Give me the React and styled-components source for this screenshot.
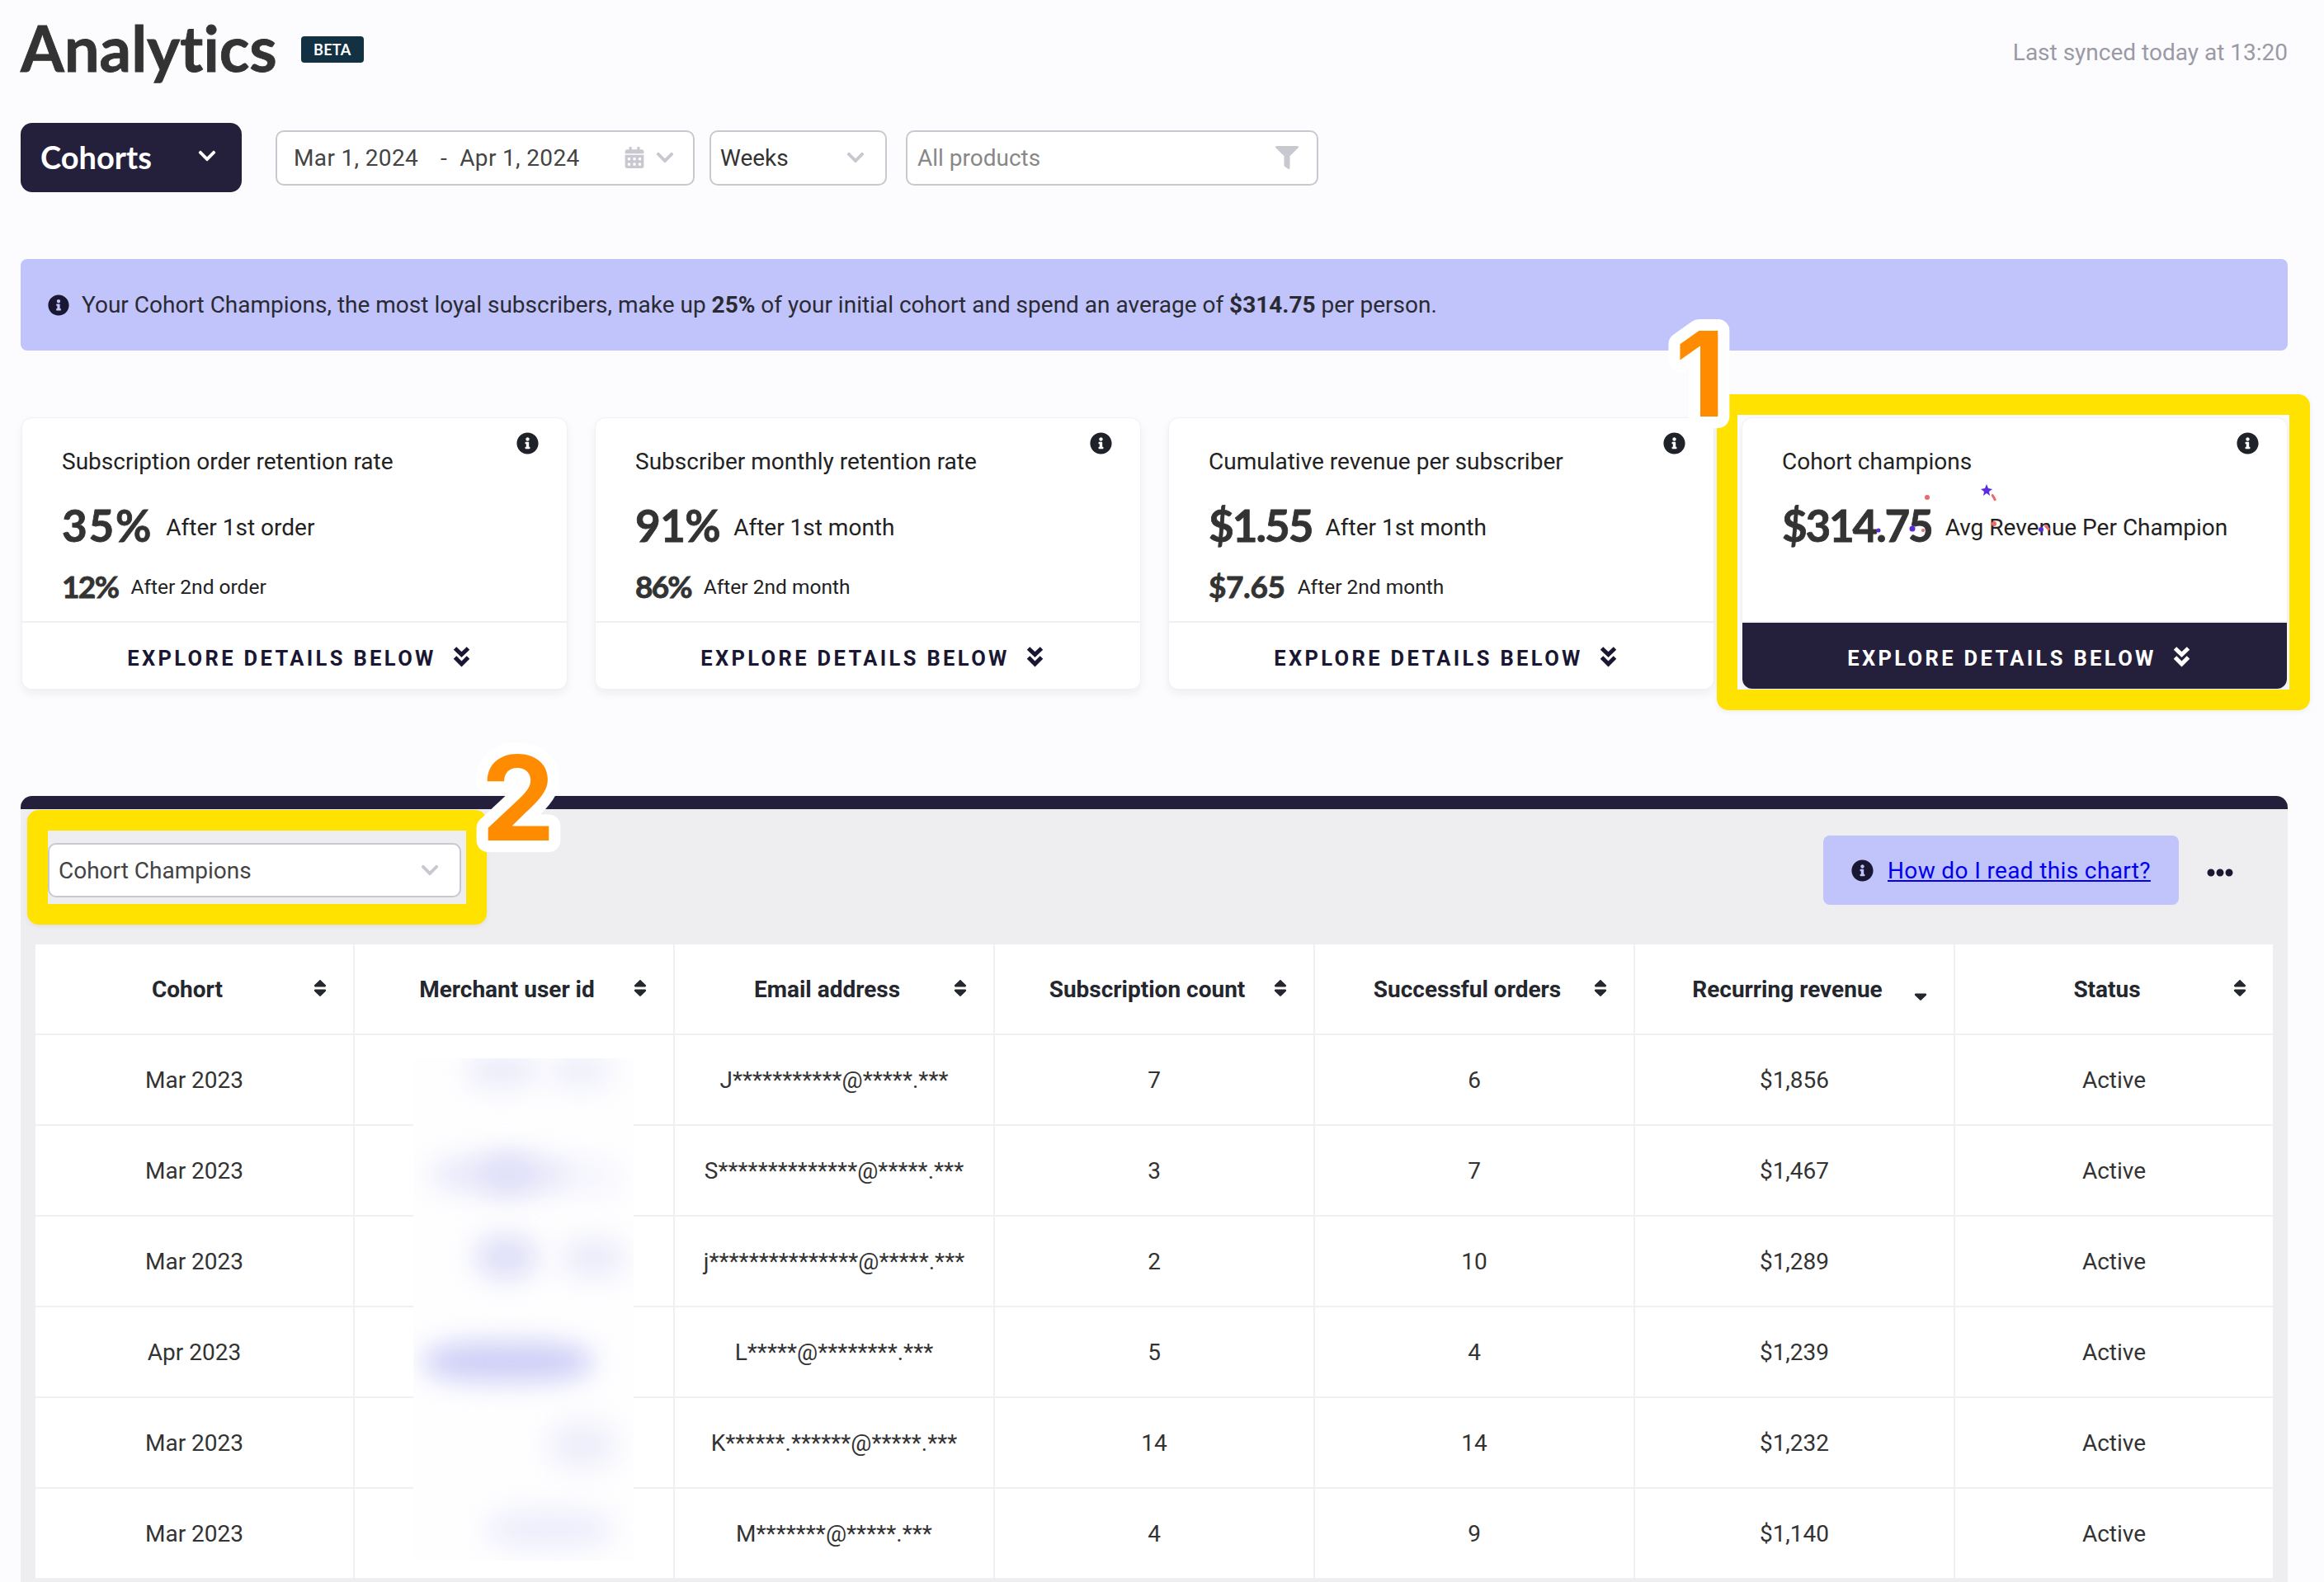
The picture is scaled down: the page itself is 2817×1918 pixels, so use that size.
import React from "react";
import styled, { createGlobalStyle } from "styled-components";
import { FaInfoCircle, FaChevronDown, FaCalendarAlt, FaFilter, FaSort, FaSortDown, FaEllipsisH } from "react-icons/fa";

const Global = createGlobalStyle`
  html, body { margin: 0; padding: 0; height: 1918px; overflow: hidden; background: #fcfcfe; }
  body { font-family: Roboto, "Liberation Sans", sans-serif; color: #222; }
  * { box-sizing: border-box; }
`;

const Page = styled.div`
  position: relative;
  height: 1918px;
  padding: 0 44px 0 25px;
  overflow: hidden;
`;

const Header = styled.header`
  display: flex;
  align-items: center;
  height: 120px;
`;
const Title = styled.h1`
  margin: -4px 0 0;
  font: 700 76px/120px Lato, sans-serif;
  font-variant-ligatures: none;
  -webkit-text-stroke: .8px #333;
  color: #333;
`;
const Beta = styled.span`
  margin-left: 29px;
  width: 76px;
  height: 32px;
  border-radius: 4px;
  background: #123244;
  color: #fff;
  font: 700 18px/32px Lato, sans-serif;
  text-align: center;
  letter-spacing: .3px;
`;
const Synced = styled.div`
  margin-left: auto;
  padding-top: 6px;
  font-size: 28px;
  color: #9a9aa6;
`;

const Filters = styled.div`
  display: flex;
  align-items: center;
  height: 84px;
  margin-top: 29px;
`;
const ReportButton = styled.div`
  display: flex;
  align-items: center;
  justify-content: space-between;
  width: 268px;
  height: 84px;
  padding: 0 30px 3px 24px;
  border-radius: 14px;
  background: #24203c;
  color: #fff;
  font: 700 38px Lato, sans-serif;
  svg { width: 24px; height: 24px; margin-top: -2px; }
`;
const Field = styled.div`
  display: flex;
  align-items: center;
  width: ${(p) => p.$w}px;
  height: 67px;
  margin-left: ${(p) => p.$ml}px;
  padding: 0 ${(p) => p.$pr}px 0 ${(p) => p.$pl}px;
  border: 2px solid #c8c8d0;
  border-radius: 10px;
  background: #fff;
  font-size: 28px;
  letter-spacing: ${(p) => p.$track || 0}px;
  color: ${(p) => p.$color || "#444"};
`;
const Spread = styled.span`
  margin-left: auto;
  display: flex;
  align-items: center;
  gap: 12px;
  color: #c8c8d0;
`;
const DateDash = styled.span`
  margin: 0 15px 0 27px;
`;

const Banner = styled.div`
  display: flex;
  align-items: center;
  gap: 15px;
  height: 111px;
  margin-top: 81px;
  padding-left: 33px;
  border-radius: 8px;
  background: #c1c3fb;
  font-size: 28px;
  color: #2a2a33;
  svg { width: 26px; height: 26px; color: #1a1733; }
  b { font-weight: 700; }
`;

const Cards = styled.div`
  display: grid;
  grid-template-columns: repeat(4, 660px);
  gap: 35px;
  margin: 82px 0 0 2px;
`;
const Card = styled.div`
  position: relative;
  display: flex;
  flex-direction: column;
  height: 328px;
  border-radius: 12px;
  background: #fff;
  box-shadow: 0 0 0 1px #f1f1f3, 0 5px 12px rgba(30, 30, 60, .07);
  overflow: hidden;
`;
const InfoBadge = styled.span`
  position: absolute;
  top: 17px;
  right: 34px;
  color: #1f2229;
  svg { width: 27px; height: 27px; display: block; }
`;
const CardBody = styled.div`
  flex: 1;
  padding: 34px 0 0 48px;
  border-bottom: 2px solid #f0f0f2;
`;
const CardTitle = styled.div`
  font-size: 28px;
  line-height: 38px;
  color: #222;
`;
const Metric = styled.div`
  display: flex;
  align-items: center;
  margin-top: ${(p) => (p.$small ? 22 : 27)}px;
  height: ${(p) => (p.$small ? 44 : 60)}px;
`;
const MetricValue = styled.span`
  font: 700 ${(p) => (p.$small ? 37 : 53)}px/1 Lato, sans-serif;
  letter-spacing: ${(p) => p.$track}px;
  -webkit-text-stroke: .8px #333;
  color: #333;
  margin-right: ${(p) => (p.$small ? 15 : 16)}px;
`;
const MetricLabel = styled.span`
  padding-top: ${(p) => (p.$small ? 2 : 6)}px;
  font-size: ${(p) => (p.$small ? 24.5 : 28)}px;
  color: #222;
`;
const Explore = styled.div`
  display: flex;
  align-items: center;
  justify-content: center;
  gap: 20px;
  height: 80px;
  padding: 6px 0 0 10px;
  background: ${(p) => (p.$active ? "#24203c" : "#fff")};
  color: ${(p) => (p.$active ? "#fff" : "#1a1733")};
  font-size: 25.5px;
  font-weight: 700;
  letter-spacing: 3.35px;
  svg { width: 21px; height: 25px; margin-top: -3px; }
`;

const Panel = styled.section`
  position: relative;
  margin-top: 130px;
  height: 1000px;
  border-top: 16px solid #24203c;
  border-radius: 14px 14px 0 0;
  background: #eeeef0;
`;
const PanelBar = styled.div`
  display: flex;
  align-items: center;
  height: 164px;
  padding: 0 66px 0 33px;
`;
const ChartSelect = styled(Field)`
  width: 501px;
  height: 66px;
  padding: 0 24px 0 11px;
  margin-top: -16px;
`;
const HelpLink = styled.div`
  display: flex;
  align-items: center;
  gap: 17px;
  margin: -16px 0 0 auto;
  width: 431px;
  height: 84px;
  padding-left: 34px;
  border-radius: 8px;
  background: #c1c3fb;
  font-size: 28px;
  letter-spacing: .36px;
  svg { width: 27px; height: 27px; color: #1a1733; }
  a { color: #0000ee; text-decoration: underline; }
`;
const More = styled.span`
  display: block;
  margin: -11px 0 0 34px;
  color: #1a1733;
  svg { width: 32px; height: 32px; display: block; }
`;

const Table = styled.div`
  position: relative;
  display: grid;
  grid-template-columns: 387px repeat(5, 388px) 385px;
  grid-auto-rows: 110px;
  width: 2712px;
  margin: 0 0 0 18px;
  background: #fff;
`;
const HeadCell = styled.div`
  display: flex;
  align-items: center;
  padding: 0 32px 0 39px;
  border-right: ${(p) => (p.$last ? 0 : "2px solid #f0f0f2")};
  border-bottom: 2px solid #f0f0f2;
  font-size: 28px;
  font-weight: 700;
  color: #24272e;
`;
const HeadLabel = styled.span`
  flex: 1;
  text-align: center;
  white-space: nowrap;
`;
const SortIcon = styled.span`
  display: flex;
  margin-left: 8px;
  flex: none;
  margin-top: ${(p) => (p.$down ? 8 : -2)}px;
  svg { width: 16px; height: 26px; display: block; }
`;
const Cell = styled.div`
  display: flex;
  align-items: center;
  justify-content: center;
  border-right: ${(p) => (p.$last ? 0 : "2px solid #f0f0f2")};
  border-bottom: 2px solid #f0f0f2;
  font-size: 28px;
  color: #333;
  white-space: nowrap;
`;

const Redaction = styled.div`
  position: absolute;
  left: 458px;
  top: 138px;
  width: 267px;
  height: 609px;
  background: #fefeff;
  overflow: hidden;
`;
const Blob = styled.div`
  position: absolute;
  border-radius: 40%;
  filter: blur(16px);
`;

const Frame = styled.div`
  position: absolute;
  border: 25px solid #ffe200;
  border-radius: 14px;
  box-shadow: 0 2px 6px rgba(0,0,0,.06);
  pointer-events: none;
`;
const NumberMark = styled.svg`
  position: absolute;
  overflow: visible;
  pointer-events: none;
  text {
    font: 700 143px Inter, sans-serif;
    fill: #ff8c00;
    stroke: #fff;
    stroke-width: 28px;
    stroke-linejoin: round;
    paint-order: stroke fill;
  }
`;
const Confetti = styled.svg`
  position: absolute;
  left: 0;
  top: 0;
  width: 660px;
  height: 328px;
  pointer-events: none;
`;

const DoubleChevron = () => (
  <svg viewBox="0 0 21 25" fill="none" stroke="currentColor" strokeWidth="5">
    <path d="M2.5 2l8 7.5 8-7.5" />
    <path d="M2.5 13l8 8 8-8" />
  </svg>
);

const cards = [
  { t: "Subscription order retention rate", a: "35%", at: 1.8, al: "After 1st order", b: "12%", bt: -1.6, bl: "After 2nd order" },
  { t: "Subscriber monthly retention rate", a: "91%", at: -0.6, al: "After 1st month", b: "86%", bt: -1.8, bl: "After 2nd month" },
  { t: "Cumulative revenue per subscriber", a: "$1.55", at: -2, al: "After 1st month", b: "$7.65", bt: -0.4, bl: "After 2nd month" },
  { t: "Cohort champions", a: "$314.75", at: -2.2, al: "Avg Revenue Per Champion", active: true },
];
const columns = ["Cohort", "Merchant user id", "Email address", "Subscription count", "Successful orders", "Recurring revenue", "Status"];
const rows = [
  ["Mar 2023", "J***********@*****.***", "7", "6", "$1,856"],
  ["Mar 2023", "S**************@*****.***", "3", "7", "$1,467"],
  ["Mar 2023", "j***************@*****.***", "2", "10", "$1,289"],
  ["Apr 2023", "L*****@********.***", "5", "4", "$1,239"],
  ["Mar 2023", "K******.******@*****.***", "14", "14", "$1,232"],
  ["Mar 2023", "M*******@*****.***", "4", "9", "$1,140"],
];
const blobs = [
  [65, -6, 85, 42, "#ebebfa"], [165, -6, 75, 42, "#eeeefb"],
  [22, 118, 180, 46, "#e8e8fa"], [85, 118, 60, 44, "#dedef8"], [190, 126, 60, 36, "#f4f4fd"],
  [75, 214, 75, 54, "#dfdff8"], [180, 218, 76, 48, "#ebebfa"],
  [12, 344, 205, 48, "#cdcdf7"],
  [165, 440, 80, 58, "#eeeefb"],
  [90, 548, 150, 46, "#ecedfb"],
];

export default function App() {
  return (
    <Page>
      <Global />
      <Header>
        <Title>Analytics</Title>
        <Beta>BETA</Beta>
        <Synced>Last synced today at 13:20</Synced>
      </Header>
      <Filters>
        <ReportButton>Cohorts <FaChevronDown /></ReportButton>
        <Field $w={508} $ml={41} $pl={20} $pr={22} $track={0.35}>
          Mar 1, 2024<DateDash>-</DateDash>Apr 1, 2024
          <Spread><FaCalendarAlt size={26} /><FaChevronDown size={24} /></Spread>
        </Field>
        <Field $w={215} $ml={18} $pl={11} $pr={24} $color="#333">
          Weeks<Spread><FaChevronDown size={24} /></Spread>
        </Field>
        <Field $w={500} $ml={23} $pl={12} $pr={22} $color="#888">
          All products<Spread><FaFilter size={28} /></Spread>
        </Field>
      </Filters>
      <Banner>
        <FaInfoCircle />
        <span>Your Cohort Champions, the most loyal subscribers, make up <b>25%</b> of your initial cohort and spend an average of <b>$314.75</b> per person.</span>
      </Banner>
      <Cards>
        {cards.map((c) => (
          <Card key={c.t}>
            <InfoBadge><FaInfoCircle /></InfoBadge>
            <CardBody>
              <CardTitle>{c.t}</CardTitle>
              <Metric><MetricValue $track={c.at}>{c.a}</MetricValue><MetricLabel>{c.al}</MetricLabel></Metric>
              {c.b && <Metric $small><MetricValue $small $track={c.bt}>{c.b}</MetricValue><MetricLabel $small>{c.bl}</MetricLabel></Metric>}
            </CardBody>
            <Explore $active={c.active}>EXPLORE DETAILS BELOW <DoubleChevron /></Explore>
            {c.active && (
              <Confetti viewBox="0 0 660 328">
                <path d="M296 80l2 5 5 1-4 3 1 5-4-3-4 3 1-5-4-3 5-1z" fill="#5b2be0" />
                <rect x="303" y="92" width="3" height="9" rx="1.5" fill="#ec6a6a" transform="rotate(-30 304 96)" />
                <circle cx="224" cy="96" r="3" fill="#ec6a6a" />
                <circle cx="165" cy="136" r="2.5" fill="#5b2be0" />
                <circle cx="206" cy="134" r="3.5" fill="#5b2be0" />
                <circle cx="219" cy="136" r="2" fill="#ec6a6a" />
                <circle cx="305" cy="128" r="3" fill="#ec6a6a" />
                <circle cx="362" cy="135" r="3" fill="#5b2be0" />
                <rect x="368" y="129" width="3" height="8" rx="1.5" fill="#ec6a6a" transform="rotate(-45 369 133)" />
              </Confetti>
            )}
          </Card>
        ))}
      </Cards>
      <Panel>
        <PanelBar>
          <ChartSelect>Cohort Champions<Spread><FaChevronDown size={24} /></Spread></ChartSelect>
          <HelpLink><FaInfoCircle /><a href="#chart">How do I read this chart?</a></HelpLink>
          <More><FaEllipsisH /></More>
        </PanelBar>
        <Table>
          {columns.map((c, i) => (
            <HeadCell key={c} $last={i === 6}>
              <HeadLabel>{c}</HeadLabel>
              <SortIcon $down={i === 5}>{i === 5 ? <FaSortDown /> : <FaSort />}</SortIcon>
            </HeadCell>
          ))}
          {rows.map((r, i) => (
            <React.Fragment key={i}>
              <Cell>{r[0]}</Cell>
              <Cell />
              <Cell>{r[1]}</Cell>
              <Cell>{r[2]}</Cell>
              <Cell>{r[3]}</Cell>
              <Cell>{r[4]}</Cell>
              <Cell $last>Active</Cell>
            </React.Fragment>
          ))}
          <Redaction>
            {blobs.map(([l, t, w, h, c], i) => (
              <Blob key={i} style={{ left: l, top: t, width: w, height: h, background: c }} />
            ))}
          </Redaction>
        </Table>
      </Panel>
      <Frame style={{ left: 2081, top: 478, width: 719, height: 383 }} />
      <Frame style={{ left: 33, top: 982, width: 557, height: 139 }} />
      <NumberMark style={{ left: 2030, top: 505, width: 100, height: 20 }}><text x="0" y="0">1</text></NumberMark>
      <NumberMark style={{ left: 583, top: 1019, width: 100, height: 20 }}><text x="0" y="0">2</text></NumberMark>
    </Page>
  );
}
